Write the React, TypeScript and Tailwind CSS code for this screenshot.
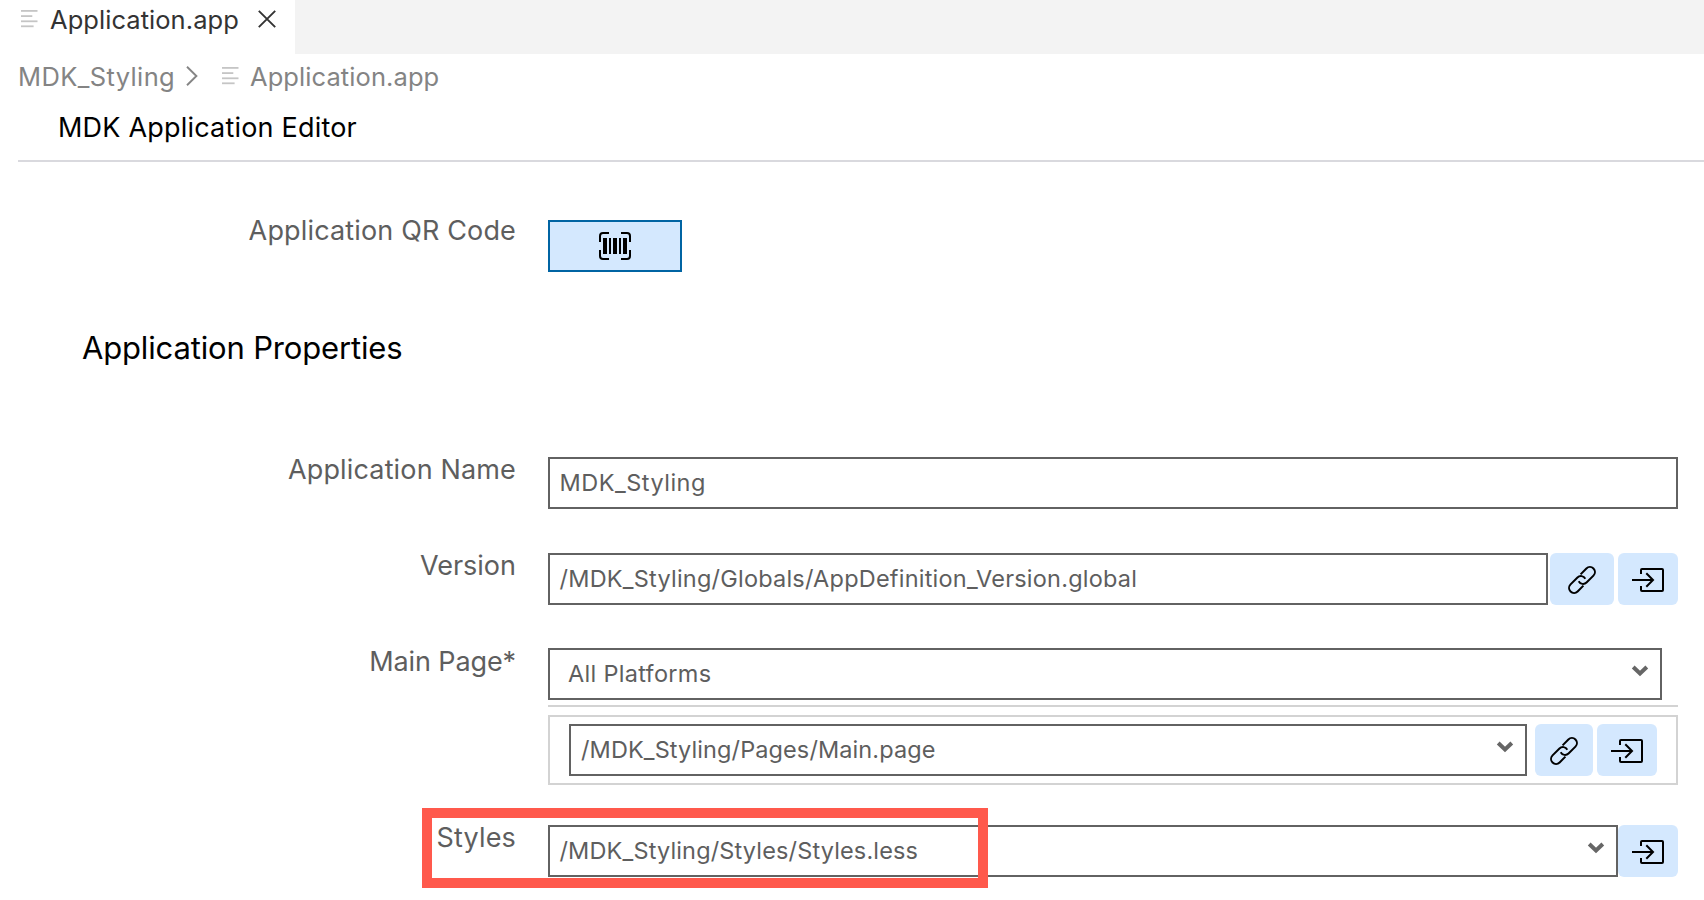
import React from "react";

function FileIcon() {
  return (
    <svg width="18" height="18" viewBox="0 0 18 18" fill="#c5c5c5" className="shrink-0">
      <rect x="0" y="0" width="16.5" height="1.8" />
      <rect x="0" y="5.2" width="11.3" height="1.8" />
      <rect x="0" y="10.4" width="16.5" height="1.8" />
      <rect x="0" y="15.4" width="12.6" height="1.8" />
    </svg>
  );
}

function Chevron() {
  return (
    <svg width="16" height="12" viewBox="0 0 16 12" fill="none" className="shrink-0 overflow-visible">
      <path d="M1.2 2 8 8.4 14.8 2" stroke="#666" strokeWidth="4" strokeLinejoin="miter" />
    </svg>
  );
}

function LinkIcon() {
  return (
    <svg width="28" height="28" viewBox="0 0 28 28" fill="none" stroke="#000" strokeWidth="2">
      <g transform="translate(14 14) rotate(-45)">
        <path d="M3-5H11.2a5 5 0 0 1 0 10H1.4A5 5 0 0 1-3.3-1.4" />
        <path d="M-3 5H-11.2a5 5 0 0 1 0-10H-1.4A5 5 0 0 1 3.3 1.4" />
      </g>
    </svg>
  );
}

function GoToIcon() {
  return (
    <svg width="32" height="28" viewBox="0 0 32 28" fill="none" stroke="#000" strokeWidth="2">
      <path d="M9 8V4q0-1 1-1H30q1 0 1 1V24q0 1-1 1H10q-1 0-1-1V20" />
      <path d="M0 14H21M14.3 7.3 21 14l-6.7 6.7" />
    </svg>
  );
}

function BarcodeIcon() {
  return (
    <svg width="32" height="28" viewBox="0 0 32 28">
      <path
        d="M1 10V4q0-3 3-3H10M22 1H28q3 0 3 3V10M31 18V24q0 3-3 3H22M10 27H4q-3 0-3-3V18"
        fill="none"
        stroke="#000"
        strokeWidth="2"
      />
      <path d="M4 6h4v16H4zM10 6h2v16h-2zM14 6h4v16h-4zM20 6h2v16h-2zM24 6h4v16h-4z" />
    </svg>
  );
}

function IconButton({ className, children }: { className: string; children: React.ReactNode }) {
  return (
    <button className={`flex h-[52px] shrink-0 items-center justify-center rounded-md bg-[#d4e8fe] pt-0.5 ${className}`}>
      {children}
    </button>
  );
}

function Field({ className, children }: { className: string; children: React.ReactNode }) {
  return (
    <div
      className={`flex h-[52px] shrink-0 justify-between border-2 border-[#626262] bg-white text-[23.5px] leading-[47px] ${className}`}
    >
      {children}
    </div>
  );
}

function Row({
  label,
  className,
  labelClass = "tracking-[0.15px]",
  children,
}: {
  label: string;
  className: string;
  labelClass?: string;
  children: React.ReactNode;
}) {
  return (
    <div className={`flex shrink-0 ${className}`}>
      <div className={`w-[516px] shrink-0 text-right text-[27px] leading-[34px] ${labelClass}`}>{label}</div>
      <div className="ml-8 w-[1130px]">{children}</div>
    </div>
  );
}

export default function App() {
  return (
    <div className="relative flex h-[900px] w-[1704px] flex-col overflow-hidden bg-white font-['Inter','Liberation_Sans',sans-serif] text-[#5e5e5e]">
      <header className="flex h-[54px] shrink-0 bg-[#f3f3f3]">
        <div className="flex w-[295px] items-start bg-white pl-[21px] text-[#333]">
          <div className="pt-2.5">
            <FileIcon />
          </div>
          <span className="ml-[11px] mt-1 w-[189px] whitespace-nowrap text-[25.5px] leading-8 tracking-[0.05px]">
            Application.app
          </span>
          <svg width="18" height="18" viewBox="0 0 18 18" className="ml-[19px] mt-2.5 shrink-0" fill="none" stroke="#333" strokeWidth="1.9">
            <path d="M.8.8l16.4 16.4M17.2.8.8 17.2" />
          </svg>
        </div>
      </header>

      <nav className="flex h-[56px] shrink-0 items-start pl-[18px] pt-[7px] text-[25.5px] leading-8 text-[#848484]">
        <span className="w-[168px] whitespace-nowrap tracking-[0.38px]">MDK_Styling</span>
        <svg width="12" height="20" viewBox="0 0 12 20" className="mt-[5px]" fill="none" stroke="#858585" strokeWidth="1.9">
          <path d="M1 .8 10.4 10 1 19.2" />
        </svg>
        <div className="ml-6 pt-1.5">
          <FileIcon />
        </div>
        <span className="ml-2.5 whitespace-nowrap tracking-[0.08px]">Application.app</span>
      </nav>

      <h1 className="ml-[18px] h-[52px] shrink-0 border-b-2 border-[#d9d9de] pl-10 text-[27px] leading-9 tracking-[0.2px] text-black">
        MDK Application Editor
      </h1>

      <main className="flex flex-col pt-[52px]">
        <Row label="Application QR Code" className="h-[119px]">
          <button className="mt-1.5 flex h-[52px] w-[134px] items-center justify-center border-2 border-[#0064a3] bg-[#d4e8fe]">
            <BarcodeIcon />
          </button>
        </Row>

        <h2 className="h-[120px] shrink-0 pl-[82px] text-[31px] leading-[30px] tracking-[-0.16px] text-black">
          Application Properties
        </h2>

        <Row label="Application Name" className="h-24">
          <Field className="mt-1 w-full pl-[9.5px] tracking-[0.5px]">MDK_Styling</Field>
        </Row>

        <Row label="Version" className="h-24" labelClass="tracking-normal">
          <div className="mt-1 flex">
            <Field className="w-[1000px] pl-[9.5px] tracking-[0.22px]">
              /MDK_Styling/Globals/AppDefinition_Version.global
            </Field>
            <IconButton className="ml-0.5 w-16">
              <LinkIcon />
            </IconButton>
            <IconButton className="ml-1 w-[60px]">
              <GoToIcon />
            </IconButton>
          </div>
        </Row>

        <Row label="Main Page*" className="h-44" labelClass="tracking-[-0.1px]">
          <Field className="mt-[3px] w-[1114px] pl-[18px] pr-3 tracking-[0.3px]">
            <span>All Platforms</span>
            <div className="pt-[15px]">
              <Chevron />
            </div>
          </Field>
          <div className="mt-[5px] h-0.5 bg-[#d3d3d3]" />
          <div className="mt-2 flex h-[70px] border-2 border-[#d3d3d3] pl-[19px] pt-[7px]">
            <Field className="w-[958px] pl-[10px] pr-3 tracking-[0.1px]">
              <span>/MDK_Styling/Pages/Main.page</span>
              <div className="pt-[15px]">
                <Chevron />
              </div>
            </Field>
            <IconButton className="ml-2 w-[58px]">
              <LinkIcon />
            </IconButton>
            <IconButton className="ml-1 w-[60px]">
              <GoToIcon />
            </IconButton>
          </div>
        </Row>

        <Row label="Styles" className="h-20">
          <div className="mt-1 flex">
            <Field className="w-[1070px] pl-[9.5px] pr-3 tracking-[0.15px]">
              <span>/MDK_Styling/Styles/Styles.less</span>
              <div className="pt-[15px]">
                <Chevron />
              </div>
            </Field>
            <IconButton className="w-[60px]">
              <GoToIcon />
            </IconButton>
          </div>
        </Row>
      </main>

      <div className="pointer-events-none absolute left-[422px] top-[808px] h-20 w-[566px] border-10 border-[#ff594c]" />
    </div>
  );
}
